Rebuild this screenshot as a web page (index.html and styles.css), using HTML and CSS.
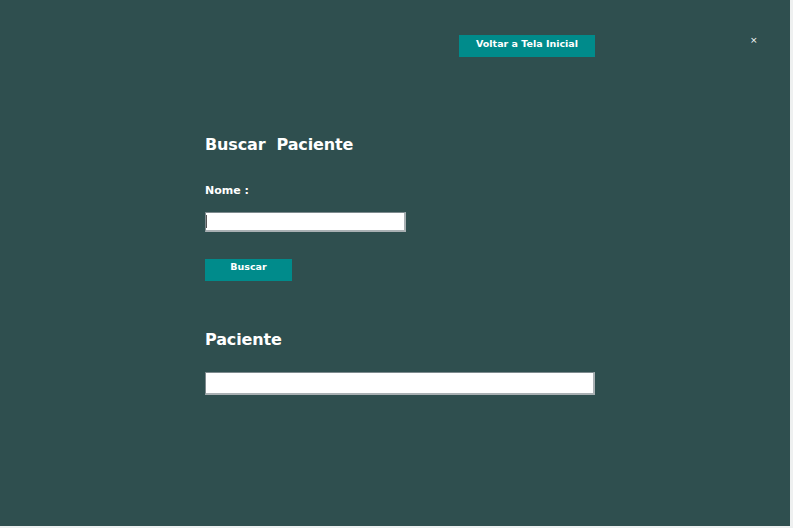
FILE: index.html
```html
<!DOCTYPE html>
<html>
<head>
<meta charset="utf-8">
<link rel="stylesheet" href="styles.css">
</head>
<body>
<div class="window">
  <div class="topbar">
    <button class="btn btn-back">Voltar a Tela Inicial</button>
    <span class="close">×</span>
  </div>
  <div class="content">
    <h1 class="title">Buscar&nbsp; Paciente</h1>
    <label class="label">Nome :</label>
    <div class="field field-name"><span class="caret"></span></div>
    <button class="btn btn-search">Buscar</button>
    <h2 class="title title-2">Paciente</h2>
    <div class="field field-result"></div>
  </div>
</div>
</body>
</html>
```
FILE: styles.css
```css
html, body {
  margin: 0;
  padding: 0;
  background: #eef0f0;
}
body {
  font-family: "DejaVu Sans", sans-serif;
}
.window {
  width: 790px;
  height: 526px;
  background: #2f4f4f;
  position: relative;
}
.topbar {
  display: flex;
  align-items: flex-start;
  padding-top: 35px;
  padding-left: 459px;
}
.btn {
  background: #008b8b;
  color: #fff;
  border: 0;
  font-family: "DejaVu Sans", sans-serif;
  font-weight: bold;
  font-size: 9.5px;
  padding: 0;
  margin: 0;
  display: flex;
  justify-content: center;
  align-items: flex-start;
  cursor: pointer;
}
.btn-back {
  width: 136px;
  height: 22px;
  padding-top: 3px;
}
.close {
  color: #fff;
  font-size: 9px;
  margin-left: 155px;
  margin-top: 0;
  line-height: 10px;
}
.content {
  display: flex;
  flex-direction: column;
  align-items: flex-start;
  padding-left: 205px;
}
.title {
  color: #fff;
  font-size: 16px;
  font-weight: bold;
  letter-spacing: -0.12px;
  margin: 78px 0 0 0;
  line-height: 20px;
}
.label {
  color: #fff;
  font-size: 11px;
  font-weight: bold;
  margin-top: 29px;
  line-height: 14px;
}
.field {
  background: #fff;
  box-sizing: border-box;
  border-top: 1px solid #7d8a8e;
  border-left: 1px solid #7d8a8e;
  border-right: 2px solid #a9b0b3;
  border-bottom: 2px solid #a9b0b3;
  position: relative;
}
.field-name {
  width: 201px;
  height: 20px;
  margin-top: 14px;
}
.caret {
  position: absolute;
  left: 0;
  top: 2px;
  width: 1px;
  height: 13px;
  background: #555;
}
.btn-search {
  width: 87px;
  height: 22px;
  margin-top: 27px;
  padding-top: 2px;
}
.title-2 {
  margin-top: 49px;
}
.field-result {
  width: 390px;
  height: 23px;
  margin-top: 22px;
}
```
